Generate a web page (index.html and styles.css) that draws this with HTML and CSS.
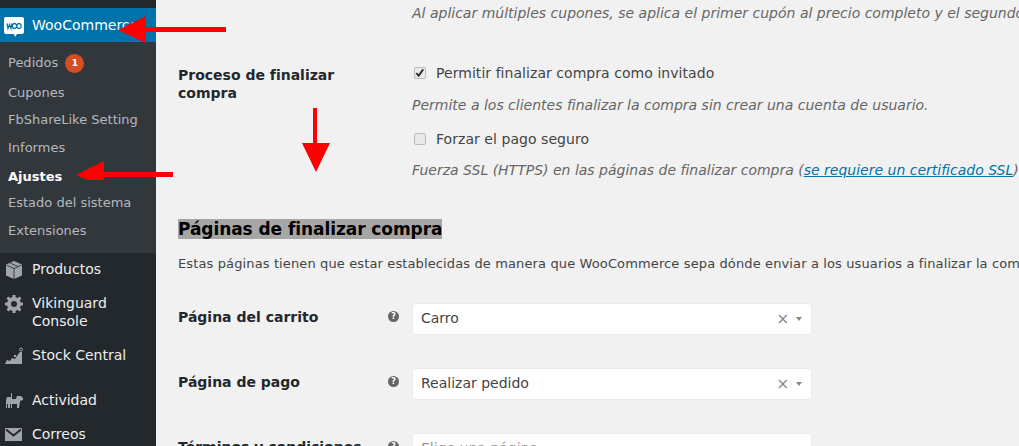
FILE: index.html
```html
<!DOCTYPE html>
<html lang="es">
<head>
<meta charset="utf-8">
<title>Ajustes WooCommerce</title>
<link rel="stylesheet" href="styles.css">
</head>
<body>
<div class="page">
  <nav class="sidebar">
    <div class="item active">
      <svg class="woo" width="20" height="20" viewBox="0 0 20 20"><path d="M2 0h16a2 2 0 0 1 2 2v13a2 2 0 0 1-2 2h-5l-2 3-1-3H2a2 2 0 0 1-2-2V2a2 2 0 0 1 2-2z" fill="#fff"/><path d="M3 6.500l1 5 1.500-4 1.500 4 1-5M10.500 6.500a2.200 2.500 0 1 0 .01 0zM15 6.500a2.200 2.500 0 1 0 .01 0z" fill="none" stroke="#0073aa" stroke-width="1.300"/></svg>
      <span>WooCommerce</span>
    </div>
    <ul class="submenu">
      <li class="first">Pedidos <span class="badge">1</span></li>
      <li>Cupones</li>
      <li>FbShareLike Setting</li>
      <li>Informes</li>
      <li class="current">Ajustes</li>
      <li>Estado del sistema</li>
      <li>Extensiones</li>
    </ul>
    <div class="item products">
      <svg width="20" height="20" viewBox="0 0 20 20"><path d="M10 1l8 3.500v11L10 19l-8-3.500v-11z" fill="#a0a5aa"/><path d="M2.500 5l7.500 3.500L17.500 5M10 8.500V19M6 3l8 3.500" fill="none" stroke="#23282d" stroke-width=".8"/></svg>
      <span>Productos</span>
    </div>
    <div class="item two-line">
      <svg width="20" height="20" viewBox="0 0 20 20"><circle cx="10" cy="10" r="5" fill="none" stroke="#a0a5aa" stroke-width="4"/><path d="M10 1v4M10 15v4M1 10h4M15 10h4M3.500 3.500l3 3M13.500 13.500l3 3M16.500 3.500l-3 3M6.500 13.500l-3 3" stroke="#a0a5aa" stroke-width="3"/></svg>
      <span>Vikinguard<br>Console</span>
    </div>
    <div class="item stock">
      <svg width="20" height="20" viewBox="0 0 20 20"><path d="M1 18l2-4 3 1 2-3 3 1 4-6 1-1h2v12z" fill="#a0a5aa"/><circle cx="17" cy="3.500" r="1.500" fill="#23282d" stroke="#a0a5aa"/><circle cx="11" cy="10" r="1.200" fill="#a0a5aa"/></svg>
      <span>Stock Central</span>
    </div>
    <div class="item activity">
      <svg width="20" height="20" viewBox="0 0 20 20"><path d="M7 2h1v6h4l1-3h4l2 2v2l-3 1v1l-1 6h-2v-4H8v4H7v-4H6v4H4v-4H3v4H2v-8l1-3h4z" fill="#a0a5aa"/></svg>
      <span>Actividad</span>
    </div>
    <div class="item mail">
      <svg width="20" height="20" viewBox="0 0 20 20"><path d="M1 3h17v13H1z" fill="#a0a5aa"/><path d="M2 4.500l7.500 6 7.500-6" fill="none" stroke="#23282d" stroke-width="2"/></svg>
      <span>Correos</span>
    </div>
  </nav>
  <main class="content">
    <p class="desc top-note">Al aplicar múltiples cupones, se aplica el primer cupón al precio completo y el segundo cupón al precio con descuento y así sucesivamente.</p>
    <section class="checkout-row">
      <h3 class="row-label">Proceso de finalizar compra</h3>
      <div class="row-options">
        <label class="check"><span class="box checked"><svg width="10" height="10" viewBox="0 0 11 11"><path d="M1.500 5.500l2.500 3 5-7" fill="none" stroke="#23282d" stroke-width="2"/></svg></span>Permitir finalizar compra como invitado</label>
        <p class="desc guest">Permite a los clientes finalizar la compra sin crear una cuenta de usuario.</p>
        <label class="check"><span class="box"></span>Forzar el pago seguro</label>
        <p class="desc ssl">Fuerza SSL (HTTPS) en las páginas de finalizar compra (<a href="#">se requiere un certificado SSL</a>).</p>
      </div>
    </section>
    <h2 class="section-title"><span>Páginas de finalizar compra</span></h2>
    <p class="intro">Estas páginas tienen que estar establecidas de manera que WooCommerce sepa dónde enviar a los usuarios a finalizar la compra.</p>
    <div class="field">
      <h3 class="field-label">Página del carrito</h3>
      <span class="help">?</span>
      <div class="select"><span class="value">Carro</span><span class="clear">×</span><span class="caret"></span></div>
    </div>
    <div class="field">
      <h3 class="field-label">Página de pago</h3>
      <span class="help">?</span>
      <div class="select"><span class="value">Realizar pedido</span><span class="clear">×</span><span class="caret"></span></div>
    </div>
    <div class="field">
      <h3 class="field-label">Términos y condiciones</h3>
      <span class="help">?</span>
      <div class="select"><span class="value placeholder">Elige una página…</span></div>
    </div>
  </main>
  <svg class="arrows" width="340" height="180" viewBox="0 0 340 180">
    <path d="M226 27v5h-80v11l-28-13 28-14v11z" fill="#f00"/>
    <path d="M173 172v5h-69v11l-28-13 28-14v11z" fill="#f00"/>
    <path d="M313 108h4v35h13l-14 29-14-29h11z" fill="#f00"/>
  </svg>
</div>
</body>
</html>
```
FILE: styles.css
```css
* { box-sizing: border-box; }
html, body { margin: 0; height: 100%; overflow: hidden; }
body { font-family: "DejaVu Sans", sans-serif; font-size: 13px; color: #444; background: #f1f1f1; }
.page { position: relative; display: flex; height: 446px; overflow: hidden; }

.sidebar { flex: 0 0 156px; background: #23282d; padding-top: 8px; color: #eee; font-size: 14px; overflow: hidden; }
.item { display: flex; gap: 8px; padding: 0 0 0 4px; line-height: 18px; }
.item svg { flex: none; }
.item span { white-space: nowrap; }
.active { height: 34px; background: #0073aa; color: #fff; align-items: center; }
.active .woo { margin-top: 3px; }
.submenu { list-style: none; margin: 0; padding: 7px 0 0; height: 211px; background: #32373c; font-size: 13px; color: #b4b9be; }
.submenu li { height: 27.700px; line-height: 27px; padding-left: 8px; white-space: nowrap; }
.submenu .first { height: 30px; }
.submenu li:nth-child(2) { height: 27px; }
.submenu li:nth-child(3) { height: 28px; }
.submenu li:nth-child(4) { height: 29px; }
.submenu li:nth-child(5) { height: 26px; }
.submenu li:nth-child(6) { height: 28px; }
.submenu .current { color: #fff; font-weight: 700; }
.badge { display: inline-block; width: 19px; height: 19px; margin-left: 3px; border-radius: 50%; background: #d54e21; color: #fff; font-size: 9px; font-weight: 700; line-height: 19px; text-align: center; vertical-align: middle; }
.products { margin-top: 7px; height: 34px; }
.two-line { height: 52px; }
.stock { height: 45px; }
.activity { height: 34px; }
.mail { height: 34px; }

.content { flex: 1; min-width: 0; padding-left: 22px; white-space: nowrap; overflow: hidden; }
.desc { margin: 0; font-style: italic; color: #666; font-size: 14px; line-height: 20px; }
.top-note { margin: 3px 0 0 234px; }
.checkout-row { display: flex; margin-top: 40px; }
.row-label { width: 234px; margin: 0; font-size: 14px; line-height: 18px; color: #23282d; white-space: normal; padding-right: 50px; padding-top: 3px; }
.row-options { flex: 1; min-width: 0; }
.check { display: flex; align-items: center; height: 20px; font-size: 14px; color: #444; padding-left: 2px; letter-spacing: .05px; }
.box { display: flex; align-items: center; justify-content: center; width: 12px; height: 12px; margin-right: 10px; border: 1px solid #bbb; border-radius: 2px; background: #e9e9e9; }
.guest { margin-top: 12px; margin-bottom: 14px; }
.ssl { margin-top: 11px; }
.ssl a { color: #0073aa; }
.section-title { margin: 39px 0 0; font-size: 17px; line-height: 20px; color: #000; font-weight: 700; letter-spacing: -.07px; }
.section-title span { background: #a6a6a6; }
.intro { margin: 16px 0 0; font-size: 13px; line-height: 18px; letter-spacing: .125px; }
.field { display: flex; align-items: flex-start; height: 65px; }
.intro + .field { margin-top: 30px; }
.field-label { width: 209px; margin: 5px 0 0; font-size: 14px; line-height: 18px; color: #23282d; }
.help { flex: none; width: 11px; height: 11px; margin: 8px 13px 0 1px; border-radius: 50%; background: #666; color: #fff; font-size: 8px; font-weight: 700; line-height: 11px; text-align: center; }
.select { display: flex; align-items: center; flex: none; width: 400px; height: 32px; padding: 0 9px 2px 8px; background: #fff; border: 1px solid #ebebeb; border-radius: 4px; font-size: 14px; color: #444; }
.value { flex: 1; }
.placeholder { color: #999; }
.clear { font-size: 15px; color: #888; margin: 2px 7px 0 0; line-height: 1; }
.caret { width: 0; height: 0; margin-top: 2px; border-left: 3px solid transparent; border-right: 3px solid transparent; border-top: 4px solid #888; }

.arrows { position: absolute; left: 0; top: 0; pointer-events: none; }
```
